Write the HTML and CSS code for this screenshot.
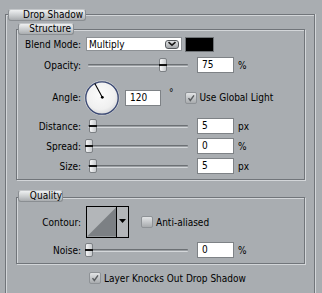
FILE: index.html
```html
<!DOCTYPE html>
<html>
<head>
<meta charset="utf-8">
<link rel="stylesheet" href="styles.css">
</head>
<body>
<div class="group outer">
  <div class="legend legend-main">Drop Shadow</div>

  <div class="group structure">
    <div class="legend legend-sub">Structure</div>

    <div class="row r-blend">
      <span class="label">Blend Mode:</span>
      <div class="select">
        <span class="select-text">Multiply</span>
        <span class="drop-btn"><svg width="10" height="6" viewBox="0 0 10 6"><path d="M1.5 1.2 L5 4.2 L8.5 1.2" fill="none" stroke="#1a1a1a" stroke-width="1.6"/></svg></span>
      </div>
      <div class="swatch"></div>
    </div>

    <div class="row r-opacity">
      <span class="label">Opacity:</span>
      <div class="slider"><div class="track"></div><div class="thumb" style="left:75px"></div></div>
      <div class="field">75</div>
      <span class="unit">%</span>
    </div>

    <div class="row r-angle">
      <span class="label">Angle:</span>
      <svg class="dial" width="36" height="36" viewBox="0 0 36 36">
        <defs>
          <radialGradient id="dg" cx="0.45" cy="0.4" r="0.6">
            <stop offset="0" stop-color="#fbfbfb"/>
            <stop offset="0.75" stop-color="#f0f0f0"/>
            <stop offset="1" stop-color="#d9dadc"/>
          </radialGradient>
        </defs>
        <circle cx="18" cy="18" r="17.2" fill="none" stroke="#c9ccd0" stroke-width="1"/>
        <circle cx="18" cy="18" r="16.2" fill="url(#dg)" stroke="#3a4873" stroke-width="1.3"/>
        <line x1="18.3" y1="17.3" x2="10.8" y2="3.6" stroke="#000" stroke-width="1.1"/>
        <circle cx="18.3" cy="17.3" r="1.4" fill="#000"/>
      </svg>
      <div class="field field-angle">120</div>
      <span class="deg">°</span>
      <span class="check checked"><svg width="12" height="12" viewBox="0 0 12 12"><path d="M3 6.2 L5.2 9 L9.6 2.8" fill="none" stroke="#5a5d60" stroke-width="1.7"/></svg></span>
      <span class="check-label">Use Global Light</span>
    </div>

    <div class="row r-distance">
      <span class="label">Distance:</span>
      <div class="slider"><div class="track"></div><div class="thumb" style="left:5px"></div></div>
      <div class="field">5</div>
      <span class="unit">px</span>
    </div>

    <div class="row r-spread">
      <span class="label">Spread:</span>
      <div class="slider"><div class="track"></div><div class="thumb" style="left:1px"></div></div>
      <div class="field">0</div>
      <span class="unit">%</span>
    </div>

    <div class="row r-size">
      <span class="label">Size:</span>
      <div class="slider"><div class="track"></div><div class="thumb" style="left:5px"></div></div>
      <div class="field">5</div>
      <span class="unit">px</span>
    </div>
  </div>

  <div class="group quality">
    <div class="legend legend-sub">Quality</div>

    <div class="row r-contour">
      <span class="label">Contour:</span>
      <div class="contour">
        <svg class="curve" width="30" height="30" viewBox="0 0 30 30"><polygon points="0,30 30,0 30,30" fill="#7c8084"/></svg>
        <span class="contour-arrow"><svg width="7" height="4" viewBox="0 0 7 4"><polygon points="0,0 7,0 3.5,4" fill="#000"/></svg></span>
      </div>
      <span class="check"></span>
      <span class="check-label">Anti-aliased</span>
    </div>

    <div class="row r-noise">
      <span class="label">Noise:</span>
      <div class="slider"><div class="track"></div><div class="thumb" style="left:1px"></div></div>
      <div class="field">0</div>
      <span class="unit">%</span>
    </div>
  </div>

  <div class="row r-knock">
    <span class="check checked"><svg width="12" height="12" viewBox="0 0 12 12"><path d="M3 6.2 L5.2 9 L9.6 2.8" fill="none" stroke="#5a5d60" stroke-width="1.7"/></svg></span>
    <span class="check-label">Layer Knocks Out Drop Shadow</span>
  </div>
</div>
</body>
</html>
```
FILE: styles.css
```css
html, body {
  margin: 0;
  padding: 0;
}
body {
  width: 322px;
  height: 293px;
  overflow: hidden;
  background: #a9adb1;
  font-family: "DejaVu Sans Condensed", "DejaVu Sans", sans-serif;
  font-stretch: condensed;
  font-size: 10px;
  color: #000;
}

.group {
  position: relative;
  box-sizing: border-box;
  border: 1px solid #71757a;
  box-shadow: inset 1px 1px 0 #d3d6d9, 1px 1px 0 #d3d6d9;
}

.outer {
  margin: 14px 0 0 5px;
  width: 310px;
  height: 279px;
  border-bottom-width: 0;
  box-shadow: inset 1px 1px 0 #d3d6d9, 1px 0 0 #d3d6d9;
  padding: 0 0 0 10px;
  display: flex;
  flex-direction: column;
}

.structure {
  margin-top: 14px;
  width: 289px;
  height: 151px;
  display: flex;
  flex-direction: column;
}

.quality {
  margin-top: 17px;
  width: 289px;
  height: 67px;
  display: flex;
  flex-direction: column;
}

.legend {
  position: absolute;
  top: -7px;
  height: 12px;
  box-sizing: border-box;
  border-radius: 3px;
  border: 1px solid #8a8e92;
  border-top-color: #c4c7ca;
  background: linear-gradient(#eef0f1, #c9ccce 55%, #a9acaf);
  line-height: 10px;
  text-align: right;
  padding-right: 2px;
  white-space: nowrap;
}
.legend-main {
  left: 2px;
  top: -6px;
  width: 78px;
}
.structure .legend-sub {
  left: 1px;
  width: 56px;
}
.quality .legend-sub {
  left: 1px;
  top: -8px;
  width: 45px;
  padding-right: 0;
}

.row {
  display: flex;
  align-items: center;
  height: 16px;
  flex: none;
}
.label {
  width: 64px;
  text-align: right;
  flex: none;
  white-space: nowrap;
}

.r-blend { margin-top: 6px; }
.r-opacity { margin-top: 5px; }
.r-angle { margin-top: 7px; height: 35px; }
.r-distance { margin-top: 3px; }
.r-spread { margin-top: 4px; }
.r-size { margin-top: 4px; }
.r-contour { margin-top: 8px; height: 32px; }
.r-noise { margin-top: 4px; }
.r-knock { margin-top: 8px; height: 12px; padding-left: 73px; }

.select {
  margin-left: 5px;
  width: 96px;
  height: 14px;
  box-sizing: border-box;
  background: #fff;
  border: 1px solid #8d9195;
  display: flex;
  align-items: center;
  justify-content: space-between;
}
.select-text {
  padding-left: 2px;
}
.drop-btn {
  width: 14px;
  height: 9px;
  margin-right: 2px;
  box-sizing: border-box;
  border: 1px solid #55595d;
  border-radius: 3px;
  background: linear-gradient(#e4e6e8, #a4a7aa);
  display: flex;
  align-items: center;
  justify-content: center;
}
.swatch {
  margin-left: 3px;
  width: 29px;
  height: 15px;
  box-sizing: border-box;
  background: #000;
  border: 1px solid #6f7377;
}

.slider {
  position: relative;
  margin-left: 3px;
  width: 106px;
  height: 16px;
  flex: none;
}
.track {
  position: absolute;
  left: 4px;
  right: 2px;
  top: 7px;
  height: 3px;
  box-sizing: border-box;
  border-top: 1px solid #6c7074;
  border-bottom: 1px solid #d4d7da;
  background: #9a9ea2;
  border-radius: 1px;
}
.thumb {
  position: absolute;
  top: 1px;
  width: 8px;
  height: 14px;
  box-sizing: border-box;
  border: 1px solid #7d8185;
  border-radius: 2px;
  background: linear-gradient(90deg, #f4f5f6, #c7cacd);
}
.thumb::after {
  content: "";
  position: absolute;
  left: -1px;
  right: -1px;
  top: 5px;
  height: 2px;
  background: #111;
}

.field {
  margin-left: 7px;
  width: 37px;
  height: 16px;
  box-sizing: border-box;
  background: #fff;
  border: 1px solid #7e8286;
  padding-left: 4px;
  line-height: 14px;
  flex: none;
}
.unit {
  margin-left: 4px;
}

.dial {
  margin-left: 3px;
  flex: none;
}
.field-angle {
  margin-left: 5px;
  width: 36px;
}
.deg {
  margin-left: 8px;
  align-self: flex-start;
  margin-top: 7px;
}
.check {
  width: 12px;
  height: 12px;
  box-sizing: border-box;
  border: 1px solid #8e9296;
  border-radius: 2px;
  background: linear-gradient(#e2e4e6, #a8abae);
  display: flex;
  align-items: center;
  justify-content: center;
  flex: none;
}
.check svg {
  display: block;
}
.r-angle .check { margin-left: 11px; }
.check-label {
  margin-left: 3px;
  white-space: nowrap;
}

.contour {
  margin-left: 5px;
  width: 43px;
  height: 32px;
  box-sizing: border-box;
  border: 1px solid #000;
  background: #b3b6b9;
  display: flex;
  flex: none;
}
.curve {
  display: block;
  width: 29px;
  height: 30px;
  border-right: 1px solid #000;
}
.contour-arrow {
  flex: 1;
  display: flex;
  justify-content: center;
  padding-top: 12px;
}
.contour-arrow svg { display: block; }
.r-contour .check { margin-left: 12px; }
```
